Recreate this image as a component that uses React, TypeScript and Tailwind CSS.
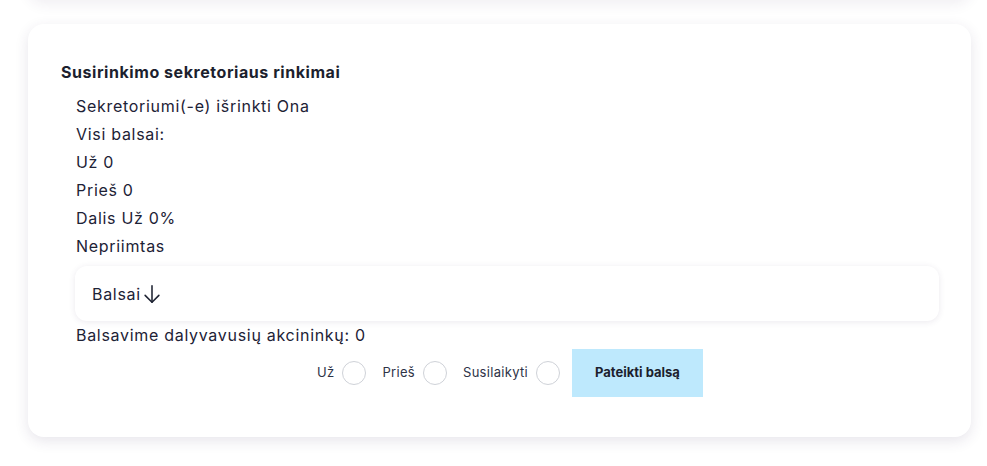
import { useState } from "react";

const lines = [
  "Sekretoriumi(-e) išrinkti Ona",
  "Visi balsai:",
  "Už 0",
  "Prieš 0",
  "Dalis Už 0%",
  "Nepriimtas",
];

const options = ["Už", "Prieš", "Susilaikyti"];

export default function App() {
  const [choice, setChoice] = useState<string | null>(null);

  return (
    <div className="flex h-[466px] flex-col overflow-hidden bg-white font-['Inter',sans-serif] text-[#1d2236]">
      {/* previous card, only its bottom edge is on screen */}
      <div className="-mt-[40px] ml-[28px] mr-[16px] h-[40px] shrink-0 rounded-2xl bg-white shadow-[0_4px_14px_rgba(60,40,90,0.08)]" />

      <section className="ml-[28px] mr-[16px] mt-[24px] shrink-0 rounded-2xl bg-white pb-[40px] pl-[33px] pr-[32px] pt-[34px] shadow-[0_4px_14px_rgba(60,40,90,0.12)]">
        <h3 className="text-[16px] font-bold leading-[28px] tracking-[0.55px] text-[#1c1f2e]">
          Susirinkimo sekretoriaus rinkimai
        </h3>
        <div className="mt-[6px] pl-[14px]">
          {lines.map((l) => (
            <p key={l} className="pl-[1px] text-base leading-[28px] tracking-[0.7px]">
              {l}
            </p>
          ))}

          <div className="mt-[6px] flex h-[55px] items-center rounded-xl bg-white px-[17px] shadow-[0_1px_6px_rgba(60,40,90,0.10)]">
            <span className="text-base tracking-[0.7px]">Balsai</span>
            <svg width="22" height="22" viewBox="0 0 24 24" fill="none" stroke="#1f2433" strokeWidth="1.7" strokeLinecap="round" strokeLinejoin="round">
              <path d="M12 3v18" />
              <path d="M4.5 13.5l7.5 7.5 7.5-7.5" />
            </svg>
          </div>

          <p className="pl-[1px] text-base leading-[28px] tracking-[0.7px]">Balsavime dalyvavusių akcininkų: 0</p>

          <div className="flex items-center justify-center pl-[6px]">
            {options.map((o) => (
              <label key={o} className="mr-[16px] flex cursor-pointer items-center gap-[8px] text-[13px] tracking-[0.3px] text-[#2e3347]">
                {o}
                <span
                  onClick={() => setChoice(o)}
                  className="flex h-[24px] w-[24px] items-center justify-center rounded-full border border-[#cfd2d8]"
                >
                  {choice === o && <span className="h-[12px] w-[12px] rounded-full bg-[#1f2a44]" />}
                </span>
              </label>
            ))}
            <button className="-ml-[4px] h-[48px] w-[131px] bg-[#bee9fd] text-[13px] font-bold text-[#1c1f2e]">
              Pateikti balsą
            </button>
          </div>
        </div>
      </section>
    </div>
  );
}
